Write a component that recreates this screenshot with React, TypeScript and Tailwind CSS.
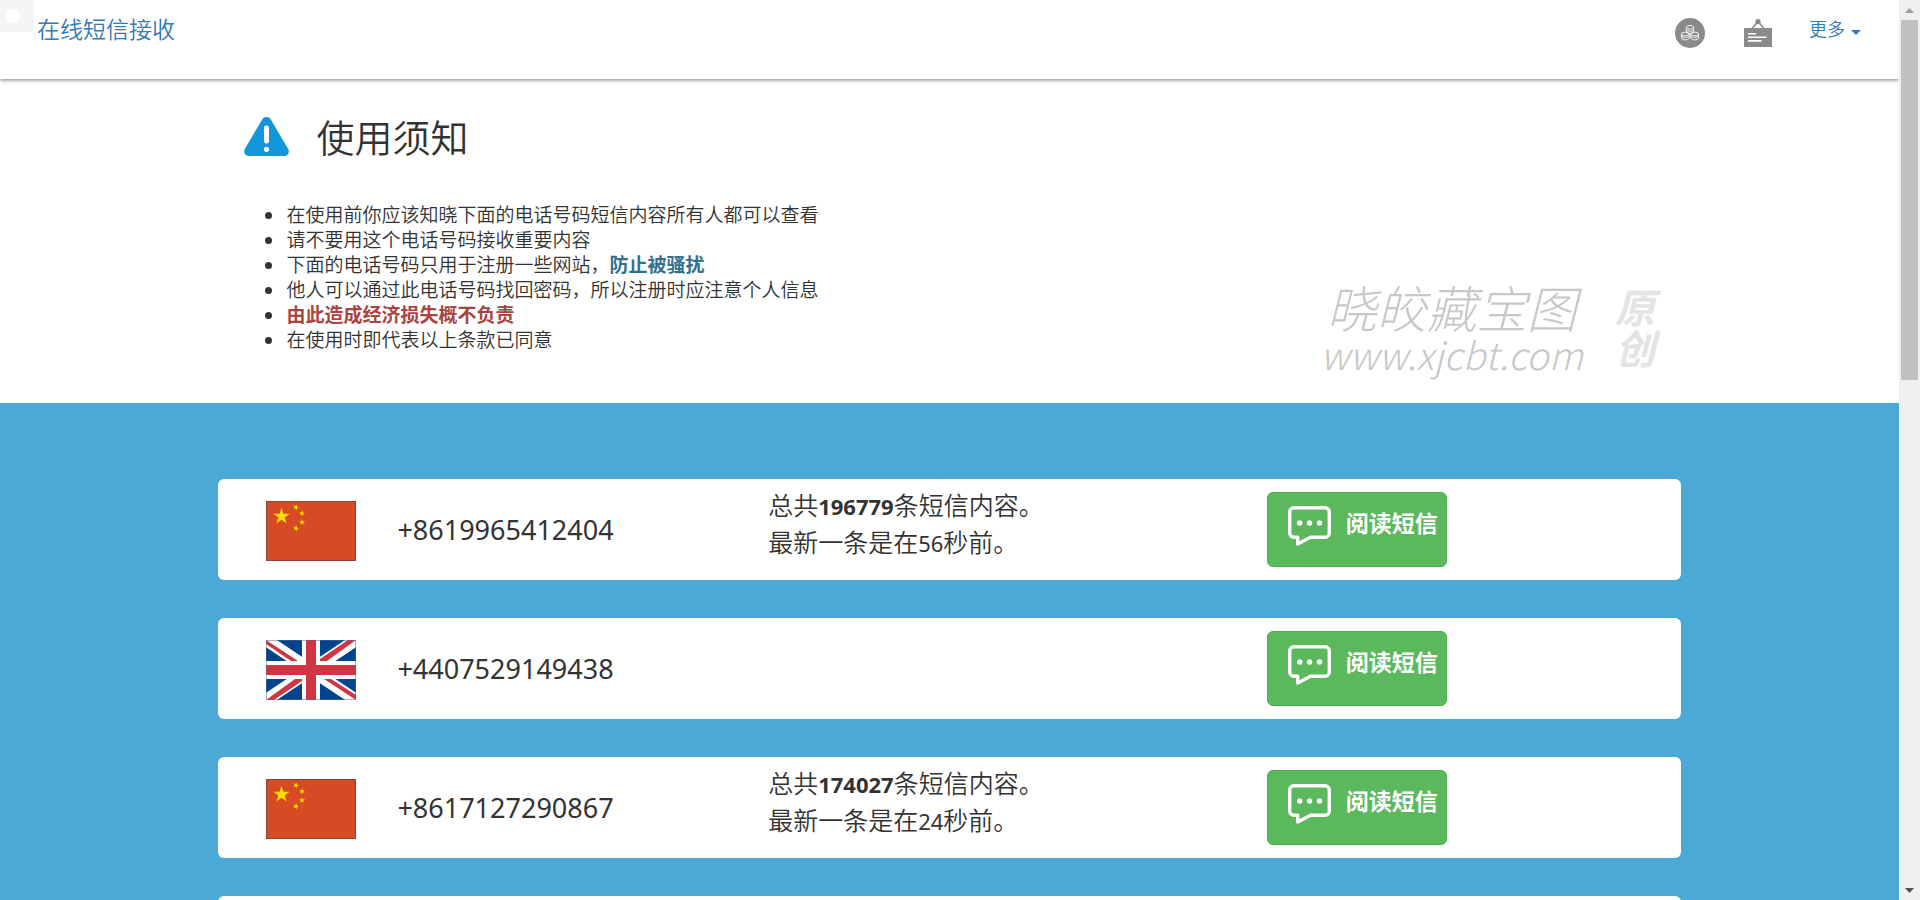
import type { ReactNode } from "react";

interface PhoneEntry {
	country: "cn" | "gb";
	number: string;
	total?: string;
	seconds?: string;
}

const phones: PhoneEntry[] = [
	{ country: "cn", number: "+8619965412404", total: "196779", seconds: "56" },
	{ country: "gb", number: "+4407529149438" },
	{ country: "cn", number: "+8617127290867", total: "174027", seconds: "24" },
];

const STAR = "0,-10 2.25,-3.09 9.51,-3.09 3.63,1.18 5.88,8.09 0,3.82 -5.88,8.09 -3.63,1.18 -9.51,-3.09 -2.25,-3.09";

function ChinaFlag() {
	return (
		<svg viewBox="0 0 90 60" className="h-[60px] w-[90px]" role="img" aria-label="CN">
			<rect x="0.5" y="0.5" width="89" height="59" fill="#d64a24" stroke="#8a4536" />
			<g fill="#ffda00">
				<polygon points={STAR} transform="translate(15.5 15.5) scale(0.87)" />
				<polygon points={STAR} transform="translate(30 6.3) rotate(25) scale(0.32)" />
				<polygon points={STAR} transform="translate(36 12.3) rotate(10) scale(0.32)" />
				<polygon points={STAR} transform="translate(36 21.3) scale(0.32)" />
				<polygon points={STAR} transform="translate(30 27.3) rotate(20) scale(0.32)" />
			</g>
		</svg>
	);
}

function BritainFlag() {
	return (
		<svg viewBox="0 0 90 60" className="h-[60px] w-[90px]" role="img" aria-label="GB">
			<rect width="90" height="60" fill="#00438f" />
			<path d="M0 0L90 60M90 0L0 60" stroke="#fff" strokeWidth="12" />
			<g fill="#cf3542">
				<path d="M0 0V4L25 21H32Z" />
				<path d="M82 0H90L61 21H54V19Z" />
				<path d="M0 60H8L36 41V39H29Z" />
				<path d="M58 39H65L90 55V60Z" />
			</g>
			<path d="M45 0V60M0 30H90" stroke="#fff" strokeWidth="18" />
			<path d="M45 0V60M0 30H90" stroke="#cf3542" strokeWidth="10" />
			<rect x="0.5" y="0.5" width="89" height="59" fill="none" stroke="#5a6a8a" strokeOpacity="0.5" />
		</svg>
	);
}

function CoinsIcon() {
	return (
		<svg viewBox="0 0 30 30" className="h-[30px] w-[30px]">
			<circle cx="15" cy="15" r="15" fill="#8a8a8a" />
			<g fill="none" stroke="#f2f2f2" strokeWidth="1">
				<ellipse cx="15" cy="9.3" rx="3.6" ry="1.8" />
				<path d="M11.4 9.3v5M18.6 9.3v5M11.4 12c1 1.6 6 1.6 7.2 0M11.4 14.3c1 1.5 6 1.5 7.2 0" />
				<ellipse cx="10.3" cy="16" rx="3.9" ry="1.8" />
				<path d="M6.4 16v4.2c1 2.2 6.8 2.2 7.8 0V16M6.4 18c1 2 6.8 2 7.8 0" />
				<ellipse cx="19.7" cy="16" rx="3.9" ry="1.8" />
				<path d="M15.8 16v4.2c1 2.2 6.8 2.2 7.8 0V16M15.8 18c1 2 6.8 2 7.8 0" />
			</g>
		</svg>
	);
}

function BoardIcon() {
	return (
		<svg viewBox="0 0 28 28" className="h-7 w-7">
			<rect y="9" width="28" height="19" rx="0.8" fill="#8a8a8a" />
			<path d="M8 9.5L14 2.5L20 9.5" fill="none" stroke="#8a8a8a" strokeWidth="1.6" />
			<circle cx="14" cy="2.7" r="2.6" fill="#8a8a8a" />
			<path d="M4 14.7h8M4 18.3h18.5M4 21.9h13.5" stroke="#fff" strokeWidth="1.6" />
		</svg>
	);
}

function WarningIcon() {
	return (
		<svg viewBox="0 0 45 39" className="h-[39px] w-[45px]">
			<path d="M18.2 2.4C20.1-.7 24.9-.7 26.8 2.4L44.2 32C46 35.4 43.8 39 40 39H5C1.2 39-1 35.4.8 32Z" fill="#1296db" />
			<path d="M22.5 11V24" stroke="#fff" strokeWidth="5" strokeLinecap="round" />
			<circle cx="22.5" cy="32.3" r="2.6" fill="#fff" />
		</svg>
	);
}

function MessageIcon() {
	return (
		<svg viewBox="0 0 43 40" className="h-10 w-[43px]">
			<path
				d="M6 1.7H37A4.3 4.3 0 0 1 41.3 6V27A4.3 4.3 0 0 1 37 31.3H22.5L9.7 38V31.3H6A4.3 4.3 0 0 1 1.7 27V6A4.3 4.3 0 0 1 6 1.7Z"
				fill="none"
				stroke="#fff"
				strokeWidth="3.4"
				strokeLinejoin="round"
			/>
			<g fill="#fff">
				<circle cx="11.7" cy="17" r="2.7" />
				<circle cx="21.5" cy="17" r="2.7" />
				<circle cx="31.5" cy="17" r="2.7" />
			</g>
		</svg>
	);
}

function Header() {
	return (
		<header className="relative z-10 flex h-[79px] items-start justify-between bg-white pl-[37px] pr-[38px] shadow-[0_1px_4px_rgba(0,0,0,0.5)]">
			<div className="absolute left-0 top-0 h-8 w-[34px] rounded-br bg-[#f5f5f5] pl-[6px] pt-[9px]">
				<div className="h-[14px] w-[13px] rounded-sm bg-white" />
			</div>
			<a href="#" className="relative pt-3 text-[23px] leading-8 text-[#337ab7]">
				在线短信接收
			</a>
			<nav className="flex items-start pt-[18px]">
				<a href="#" aria-label="积分" className="mr-[39px]">
					<CoinsIcon />
				</a>
				<a href="#" aria-label="公告" className="mr-[37px] pt-px">
					<BoardIcon />
				</a>
				<button className="flex items-center gap-[6px] text-[18px] leading-5 text-[#337ab7]">
					更多
					<svg viewBox="0 0 10 5" className="mt-2 h-[5px] w-[10px]">
						<path d="M0 0H10L5 5Z" fill="#337ab7" />
					</svg>
				</button>
			</nav>
		</header>
	);
}

function Watermark() {
	return (
		<div className="absolute right-[242px] top-[198px] flex items-center gap-8 italic" aria-hidden="true">
			<div className="text-center text-[#c8c8c8]">
				<div className="text-[50px] font-light leading-[58px]">晓皎藏宝图</div>
				<div className="text-[38px] font-light leading-[38px]">www.xjcbt.com</div>
			</div>
			<div className="w-[42px] pt-1 text-[40px] font-bold leading-[41px] text-[#e4e4e4]">原创</div>
		</div>
	);
}

function Notice() {
	return (
		<section className="relative bg-white pb-[52px] pt-[30px]">
			<div className="mx-auto w-[77%]">
				<div className="flex items-center gap-[27px] pl-[26px]">
					<WarningIcon />
					<h1 className="text-[38px] leading-[54px]">使用须知</h1>
				</div>
				<ul className="mt-[38px] list-disc pl-[68px] text-[19px] leading-[25px]">
					<li>在使用前你应该知晓下面的电话号码短信内容所有人都可以查看</li>
					<li>请不要用这个电话号码接收重要内容</li>
					<li>
						下面的电话号码只用于注册一些网站，<strong className="font-bold text-[#31708f]">防止被骚扰</strong>
					</li>
					<li>他人可以通过此电话号码找回密码，所以注册时应注意个人信息</li>
					<li>
						<strong className="font-bold text-[#a94442]">由此造成经济损失概不负责</strong>
					</li>
					<li>在使用时即代表以上条款已同意</li>
				</ul>
			</div>
			<Watermark />
		</section>
	);
}

function Card({ children }: { children?: ReactNode }) {
	return (
		<div className="grid min-h-[101px] grid-cols-[131px_371fr_499fr_414fr] items-center rounded-md bg-white pl-12">
			{children}
		</div>
	);
}

function PhoneCard({ phone }: { phone: PhoneEntry }) {
	return (
		<Card>
			<div className="pt-[2px]">{phone.country === "cn" ? <ChinaFlag /> : <BritainFlag />}</div>
			<div className="font-['Noto_Sans'] text-[27px] font-normal leading-9">{phone.number}</div>
			<div className="self-start pt-[7px] text-[25px] leading-[37px]">
				{phone.total && (
					<>
						<p>
							总共<strong className="font-['Noto_Sans'] text-[22px] font-bold leading-none">{phone.total}</strong>条短信内容。
						</p>
						<p>
							最新一条是在
							<span className="font-['Noto_Sans'] text-[22px] font-normal leading-none">{phone.seconds}</span>秒前。
						</p>
					</>
				)}
			</div>
			<button className="flex h-[75px] w-[180px] items-start rounded-md border border-[#4cae4c] bg-[#5cb85c] pl-5 pt-[13px] text-[23px] font-bold text-white">
				<MessageIcon />
				<span className="ml-[15px] whitespace-nowrap leading-8">阅读短信</span>
			</button>
		</Card>
	);
}

function Scrollbar() {
	return (
		<div className="flex w-[21px] shrink-0 flex-col items-center bg-[#f0f0f0]" aria-hidden="true">
			<svg viewBox="0 0 17 20" className="h-5 w-[17px]">
				<path d="M4 13L8.500 8L13 13Z" fill="#a39c9c" />
			</svg>
			<div className="h-[40%] w-[17px] bg-[#c1c1c1]" />
			<svg viewBox="0 0 17 20" className="mt-auto h-5 w-[17px]">
				<path d="M4 8H13L8.500 13Z" fill="#505050" />
			</svg>
		</div>
	);
}

export default function App() {
	return (
		<div className="flex h-screen overflow-hidden bg-white font-['Noto_Sans_CJK_SC',sans-serif] font-[350] text-[#333]">
			<div className="min-w-0 flex-1 overflow-hidden">
				<Header />
				<Notice />
				<main className="min-h-full bg-[#4aa9d5] pt-[76px]">
					<div className="mx-auto flex w-[77%] flex-col gap-[38px]">
						{phones.map((phone) => (
							<PhoneCard key={phone.number} phone={phone} />
						))}
						<Card />
					</div>
				</main>
			</div>
			<Scrollbar />
		</div>
	);
}
